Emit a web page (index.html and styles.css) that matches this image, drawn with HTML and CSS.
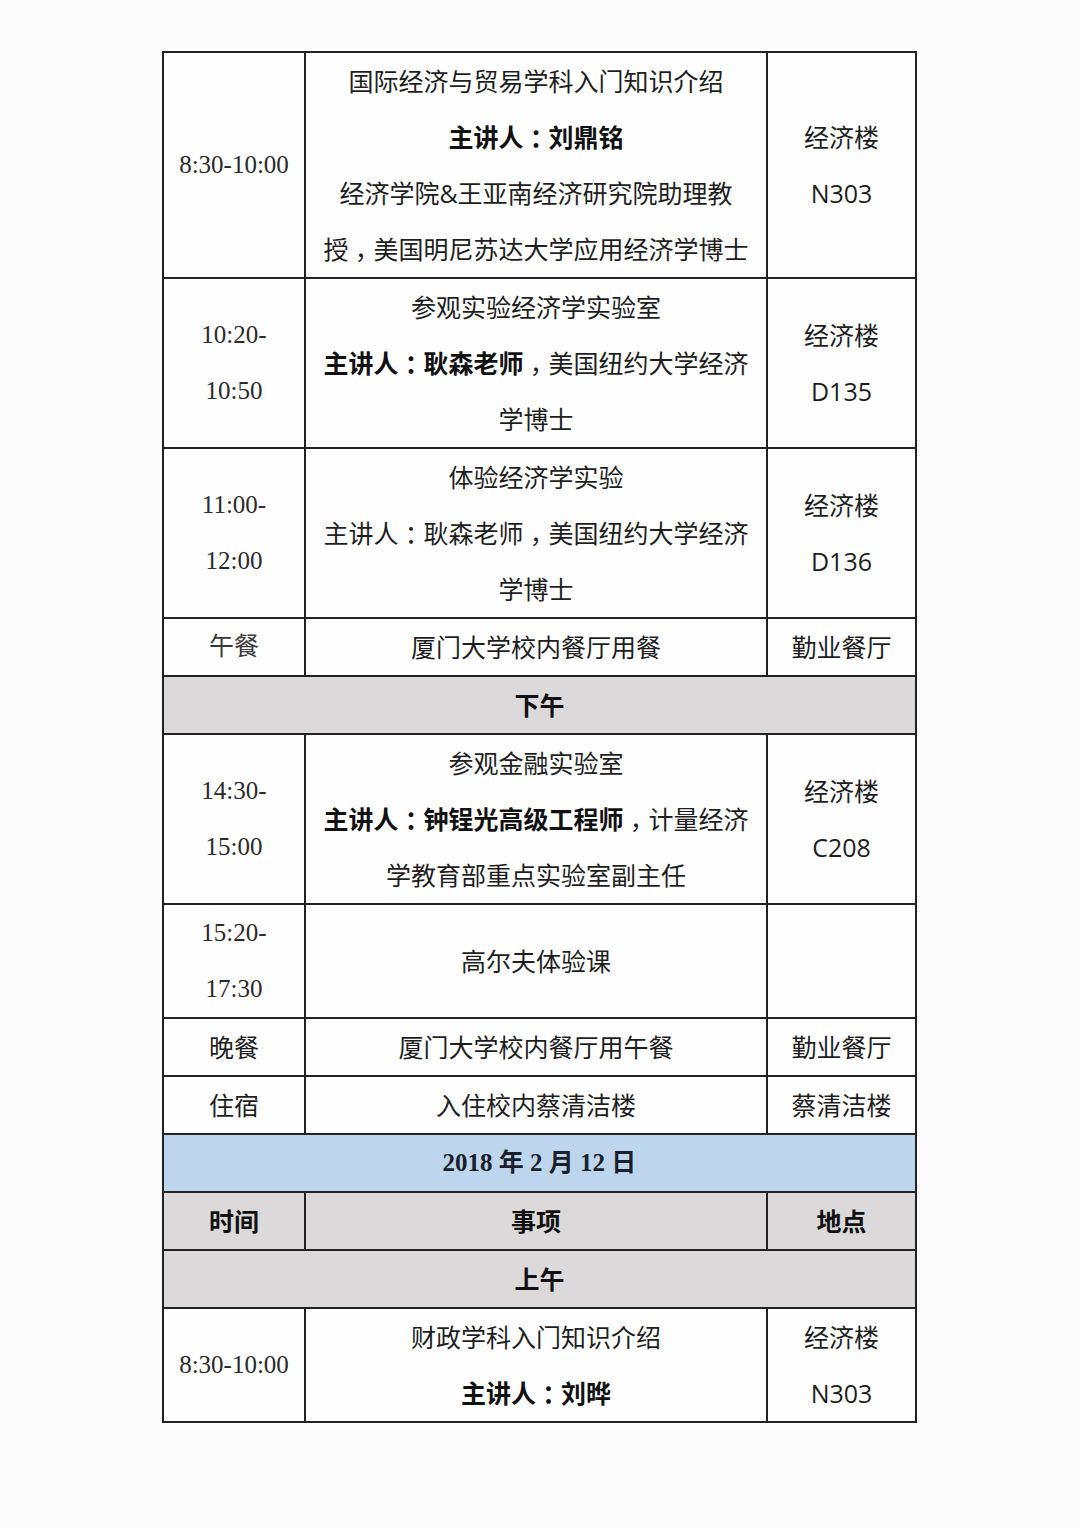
FILE: index.html
```html
<!DOCTYPE html>
<html lang="zh-CN">
<head>
<meta charset="utf-8">
<title>日程安排</title>
<link rel="stylesheet" href="styles.css">
</head>
<body>
<div class="page">
<table class="schedule">
  <colgroup>
    <col class="c-time">
    <col class="c-item">
    <col class="c-place">
  </colgroup>
  <tbody>
    <tr>
      <td class="time">8:30-10:00</td>
      <td>国际经济与贸易学科入门知识介绍<br><b>主讲人<span class="pc">：</span>刘鼎铭</b><br>经济学院&amp;王亚南经济研究院助理教<br>授<span class="pc">，</span>美国明尼苏达大学应用经济学博士</td>
      <td>经济楼<br>N303</td>
    </tr>
    <tr>
      <td class="time">10:20-<br>10:50</td>
      <td>参观实验经济学实验室<br><b>主讲人<span class="pc">：</span>耿森老师</b><span class="pc">，</span>美国纽约大学经济<br>学博士</td>
      <td>经济楼<br>D135</td>
    </tr>
    <tr>
      <td class="time">11:00-<br>12:00</td>
      <td>体验经济学实验<br>主讲人<span class="pc">：</span>耿森老师<span class="pc">，</span>美国纽约大学经济<br>学博士</td>
      <td>经济楼<br>D136</td>
    </tr>
    <tr>
      <td class="time song">午餐</td>
      <td>厦门大学校内餐厅用餐</td>
      <td>勤业餐厅</td>
    </tr>
    <tr class="band">
      <td colspan="3"><b>下午</b></td>
    </tr>
    <tr>
      <td class="time">14:30-<br>15:00</td>
      <td>参观金融实验室<br><b>主讲人<span class="pc">：</span>钟锃光高级工程师</b><span class="pc">，</span>计量经济<br>学教育部重点实验室副主任</td>
      <td>经济楼<br>C208</td>
    </tr>
    <tr>
      <td class="time">15:20-<br>17:30</td>
      <td>高尔夫体验课</td>
      <td></td>
    </tr>
    <tr>
      <td>晚餐</td>
      <td>厦门大学校内餐厅用午餐</td>
      <td>勤业餐厅</td>
    </tr>
    <tr>
      <td>住宿</td>
      <td>入住校内蔡清洁楼</td>
      <td>蔡清洁楼</td>
    </tr>
    <tr class="date">
      <td colspan="3">2018 年 2 月 12 日</td>
    </tr>
    <tr class="head">
      <td>时间</td>
      <td>事项</td>
      <td>地点</td>
    </tr>
    <tr class="band">
      <td colspan="3"><b>上午</b></td>
    </tr>
    <tr>
      <td class="time">8:30-10:00</td>
      <td>财政学科入门知识介绍<br><b>主讲人<span class="pc">：</span>刘晔</b></td>
      <td>经济楼<br>N303</td>
    </tr>
  </tbody>
</table>
</div>
</body>
</html>
```

FILE: styles.css
```css
html, body {
  margin: 0;
  padding: 0;
  background: #fdfcfd;
}

.page {
  padding: 51px 0 60px 162px;
}

.schedule {
  border-collapse: collapse;
  table-layout: fixed;
  width: 755px;
  font-family: "Open Sans", "Noto Sans CJK SC", sans-serif;
  font-size: 25px;
  line-height: 56px;
  color: #1e1e1e;
  background: #fefefe;
}

.c-time { width: 142px; }
.c-item { width: 462px; }
.c-place { width: 149px; }

.schedule td {
  border: 2px solid #222;
  padding: 0 2px;
  text-align: center;
  vertical-align: middle;
}

.schedule b {
  font-weight: 700;
  color: #111;
}

.pc {
  display: inline-block;
  width: 1em;
  line-height: 1;
  text-align: center;
  font-family: "Noto Sans CJK SC", sans-serif;
  font-feature-settings: "halt";
}

.schedule td.time {
  font-family: "Liberation Serif", "Noto Sans CJK SC", serif;
  color: #2a2a2a;
}

.schedule td.song {
  font-weight: 400;
  color: #3a3a3a;
}

.band td {
  background: #dbd9d9;
}

.head td {
  background: #dbd9d9;
  font-weight: 700;
  color: #111;
}

.date td {
  background: #bdd6ee;
  font-family: "Liberation Serif", "Noto Sans CJK SC", serif;
  font-weight: 700;
  color: #1a1f2b;
}
```
